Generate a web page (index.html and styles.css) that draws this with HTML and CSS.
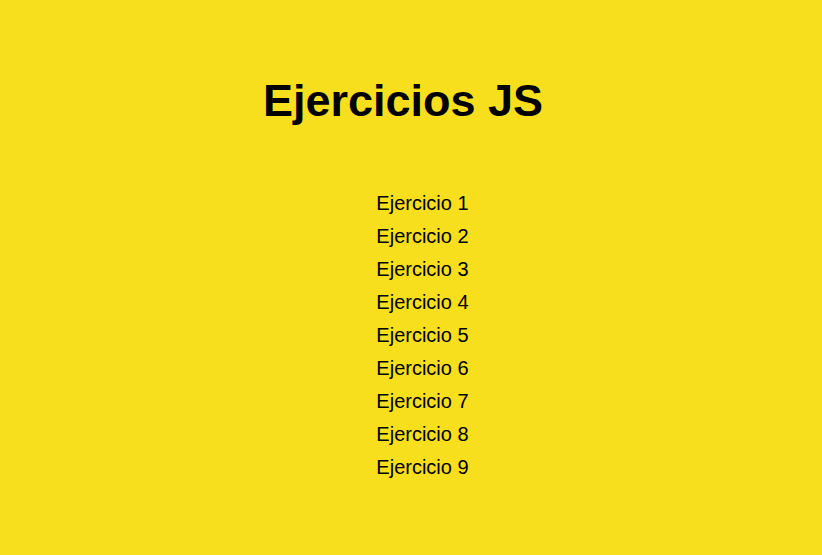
FILE: index.html
```html
<!DOCTYPE html>
<html lang="es">
<head>
<meta charset="utf-8">
<title>Ejercicios JS</title>
<link rel="stylesheet" href="styles.css">
</head>
<body>
<main class="page">
  <h1 class="title">Ejercicios JS</h1>
  <ul class="list">
    <li><a href="#">Ejercicio 1</a></li>
    <li><a href="#">Ejercicio 2</a></li>
    <li><a href="#">Ejercicio 3</a></li>
    <li><a href="#">Ejercicio 4</a></li>
    <li><a href="#">Ejercicio 5</a></li>
    <li><a href="#">Ejercicio 6</a></li>
    <li><a href="#">Ejercicio 7</a></li>
    <li><a href="#">Ejercicio 8</a></li>
    <li><a href="#">Ejercicio 9</a></li>
  </ul>
</main>
</body>
</html>
```

FILE: styles.css
```css
html, body {
  margin: 0;
  padding: 0;
  background: #f7df1e;
  height: 100%;
}
body {
  font-family: "Liberation Sans", Arial, sans-serif;
  color: #000;
}
.page {
  display: flex;
  flex-direction: column;
  align-items: center;
  padding-top: 75px;
}
.title {
  margin: 0 16px 0 0;
  font-size: 45px;
  line-height: 52px;
  font-weight: bold;
}
.list {
  list-style: none;
  margin: 60px 0 0 0;
  padding: 0 0 0 23px;
  text-align: center;
}
.list li {
  font-size: 20px;
  line-height: 33px;
}
.list a {
  color: #000;
  text-decoration: none;
}
```
